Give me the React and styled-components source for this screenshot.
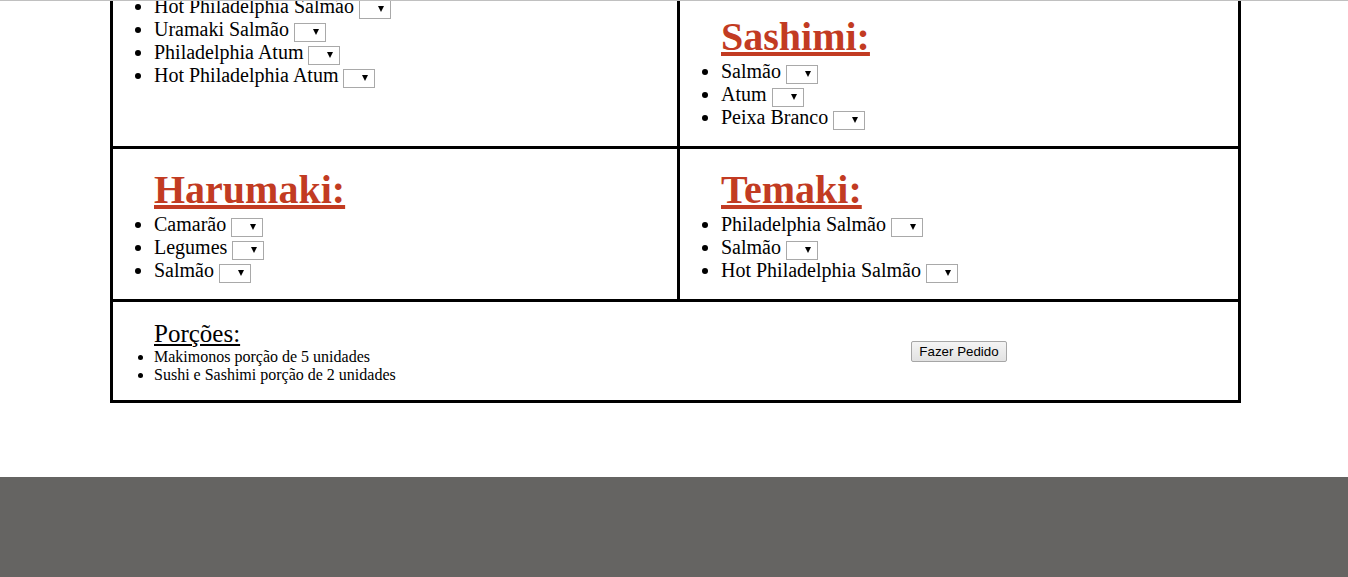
import React from "react";
import styled, { createGlobalStyle } from "styled-components";

const GlobalStyle = createGlobalStyle`
  html, body {
    margin: 0;
    padding: 0;
    background: #ffffff;
    font-family: "Liberation Serif", "Times New Roman", serif;
    color: #000000;
  }
`;

// Styled components for styling
const Viewport = styled.div`
  height: 100vh;
  display: flex;
  flex-direction: column;
  overflow: hidden;
`;

const TopRule = styled.div`
  flex: none;
  height: 1px;
  background: #c0c0c0;
`;

const Scroller = styled.div`
  flex: 1;
  display: flex;
  flex-direction: column;
  overflow: hidden;
`;

// page is shown scrolled down: the offset stands for the scroll position
const Content = styled.main`
  margin-top: -95px;
  padding: 0 107px 0 110px;
`;

const Board = styled.div`
  display: grid;
  grid-template-columns: 567px 1fr;
  grid-template-rows: 240px 153px 98px;
  border: 3px solid #000;
`;

const Cell = styled.div`
  box-sizing: border-box;
  padding: 1px;
  display: flex;
  flex-direction: column;
  justify-content: ${(p) => p.$align || "center"};
  border-right: ${(p) => (p.$divider ? "3px solid #000" : "none")};
  border-bottom: ${(p) => (p.$last ? "none" : "3px solid #000")};
  overflow: hidden;
`;

const Section = styled.div`
  margin: 16px 0;
`;

const Title = styled.h1`
  margin: 0 0 0 40px;
  font-size: 40px;
  line-height: 46px;
  font-weight: bold;
  color: #c23b22;
  text-decoration: underline;
`;

const List = styled.ul`
  margin: 0;
  padding-left: 40px;
  list-style: disc;
`;

const Item = styled.li`
  font-size: ${(p) => p.$size || 20}px;
  line-height: ${(p) => p.$lh || 23}px;
`;

// stand-in for an empty <select>, sits 6px below the text baseline
const Dropdown = styled.span`
  display: inline-block;
  position: relative;
  box-sizing: border-box;
  width: 32px;
  height: 19px;
  margin-bottom: -2px;
  border: 1px solid #a9a9a9;
  background: #fff;
  vertical-align: -4px;
  overflow: hidden;

  &::after {
    content: "";
    position: absolute;
    right: 6px;
    top: 5px;
    border-left: 3px solid transparent;
    border-right: 3px solid transparent;
    border-top: 6px solid #000;
  }
`;

const SubTitle = styled.h3`
  margin: 0 0 0 40px;
  font-size: 25px;
  line-height: 29px;
  font-weight: normal;
  text-decoration: underline;
`;

const OrderCell = styled(Cell)`
  align-items: center;
`;

const Button = styled.button`
  font-family: "Liberation Sans", Arial, sans-serif;
  font-size: 13.333px;
  color: #000;
  padding: 2px 7px;
  border: 1px solid #a6a6a6;
  border-radius: 2px;
  background: linear-gradient(#f4f4f4, #e2e2e2);
  cursor: pointer;
`;

const Footer = styled.footer`
  flex: 1;
  min-height: 100px;
  margin-top: 74px;
  background: #656462;
`;

const menu = [
  {
    title: "Uramaki:",
    align: "flex-start",
    items: [
      "Philadelphia Salmão",
      "Hot Philadelphia Salmão",
      "Uramaki Salmão",
      "Philadelphia Atum",
      "Hot Philadelphia Atum",
    ],
  },
  { title: "Sashimi:", align: "flex-end", items: ["Salmão", "Atum", "Peixa Branco"] },
  { title: "Harumaki:", items: ["Camarão", "Legumes", "Salmão"] },
  { title: "Temaki:", items: ["Philadelphia Salmão", "Salmão", "Hot Philadelphia Salmão"] },
];

const App = () => {
  return (
    <Viewport>
      <GlobalStyle />
      <TopRule />
      <Scroller>
        <Content>
          <Board>
            {menu.map((group, i) => (
              <Cell key={group.title} $align={group.align} $divider={i % 2 === 0}>
                <Section>
                  <Title>{group.title}</Title>
                  <List>
                    {group.items.map((item) => (
                      <Item key={item}>
                        {item} <Dropdown />
                      </Item>
                    ))}
                  </List>
                </Section>
              </Cell>
            ))}
            <Cell $last>
              <Section>
                <SubTitle>Porções:</SubTitle>
                <List>
                  <Item $size={16} $lh={18}>Makimonos porção de 5 unidades</Item>
                  <Item $size={16} $lh={18}>Sushi e Sashimi porção de 2 unidades</Item>
                </List>
              </Section>
            </Cell>
            <OrderCell $last>
              <Button type="button">Fazer Pedido</Button>
            </OrderCell>
          </Board>
        </Content>
        <Footer />
      </Scroller>
    </Viewport>
  );
};

export default App;
